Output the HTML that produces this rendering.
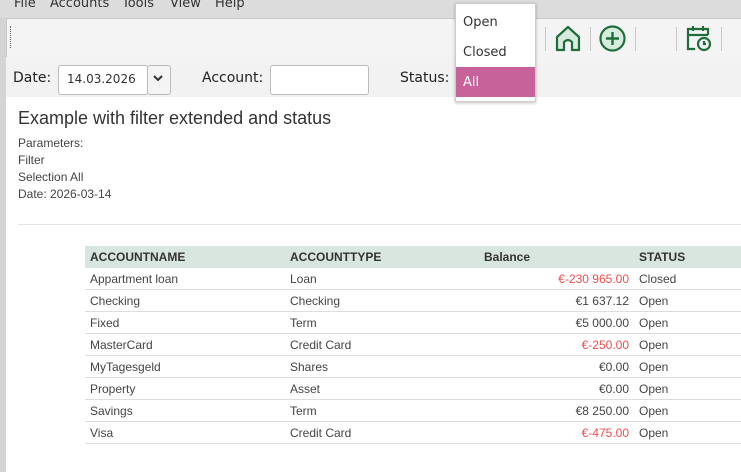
<!DOCTYPE html>
<html><head><style>
body{margin:0;width:741px;height:472px;overflow:hidden;background:#fff;font-family:"DejaVu Sans","Liberation Sans",sans-serif;position:relative}
.abs{position:absolute}
.menu{left:0;top:0;width:741px;height:18px;background:#dcdcdc;font-size:13px;color:#333}
.menu span{position:absolute;top:-4px}
.tb{left:6px;top:18px;width:735px;height:38px;background:#f4f4f4;border-top:1px solid #c8c8c8;border-bottom:1px solid #c8c8c8;border-left:1px solid #c8c8c8}
.fr{left:6px;top:57px;width:735px;height:40px;background:#f2f2f2}
.lbar{left:0;top:18px;width:6px;height:454px;background:#d4d4d4}
.lab{font-size:14px;color:#222}
.inp{background:#fff;border:1px solid #bbb;border-radius:3px}
.sep{width:1px;height:24px;background:#c9c9c9;top:27px}
.rep{font-family:"Liberation Sans",sans-serif;color:#444}
table{border-collapse:collapse;table-layout:fixed;font-family:"Liberation Sans",sans-serif;font-size:12px;color:#444}
td,th{height:21px;padding:0 5px;border-bottom:1px solid #ddd;text-align:left;white-space:nowrap;overflow:hidden}
th{background:#d9e6df;height:22px;border:none;font-weight:bold;color:#333}
.r{text-align:right}.neg{color:#f04e4e}
.pop{left:455px;top:3px;width:79px;height:97px;background:#fff;border:1px solid #ccc;box-shadow:0 1px 3px rgba(0,0,0,.25);font-size:13px;color:#333}
.pop div{position:absolute;left:7px}
</style></head><body>
<div class="abs menu"><span style="left:14px">File</span><span style="left:50px">Accounts</span><span style="left:122px">Tools</span><span style="left:170px">View</span><span style="left:215px">Help</span></div>
<div class="abs lbar"></div>
<div class="abs tb"></div>
<div class="abs" style="left:10px;top:26px;width:1px;height:22px;border-left:1px dotted #666"></div>
<div class="abs sep" style="left:545px"></div><div class="abs sep" style="left:590px"></div><div class="abs sep" style="left:635px"></div><div class="abs sep" style="left:676px"></div><div class="abs sep" style="left:721px"></div>
<svg class="abs" style="left:555px;top:25px" width="26" height="27" viewBox="0 0 26 27"><path d="M2 12 L13 2 L24 12 V25 H17 V17 Q13 13 9 17 V25 H2 Z" fill="#d8ebdf" stroke="#1f6e3a" stroke-width="2.2" stroke-linejoin="round"/></svg>
<svg class="abs" style="left:599px;top:25px" width="27" height="27" viewBox="0 0 27 27"><circle cx="13.5" cy="13.5" r="12" fill="#d8ebdf" stroke="#1f6e3a" stroke-width="2.2"/><path d="M13.5 7v13M7 13.5h13" stroke="#1f6e3a" stroke-width="2.4"/></svg>
<svg class="abs" style="left:685px;top:24px" width="28" height="28" viewBox="0 0 28 28" fill="none" stroke="#1f6e3a" stroke-width="2.2"><path d="M10 25H3V5H23V11M3 11H23M8 2V7M18 2V7"/><circle cx="19" cy="20" r="6"/><path d="M19 17v3h2"/></svg>
<div class="abs fr"></div>
<div class="abs lab" style="left:13px;top:70px">Date:</div>
<div class="abs inp" style="left:58px;top:65px;width:88px;height:28px"></div>
<div class="abs" style="left:67px;top:72px;font-size:12px;color:#333">14.03.2026</div>
<div class="abs inp" style="left:147px;top:65px;width:22px;height:28px;background:#f4f4f4"></div>
<svg class="abs" style="left:152px;top:74px" width="12" height="8"><path d="M2 2l4 4 4-4" stroke="#333" stroke-width="2" fill="none"/></svg>
<div class="abs lab" style="left:202px;top:70px">Account:</div>
<div class="abs inp" style="left:270px;top:65px;width:97px;height:28px"></div>
<div class="abs lab" style="left:400px;top:70px">Status:</div>
<div class="abs pop"><div style="top:11px">Open</div><div style="top:41px">Closed</div><div style="left:0;top:63px;width:79px;height:30px;background:#c7629a"></div><div style="top:71px;color:#fff">All</div></div>
<div class="abs rep" style="left:18px;top:108px;font-size:18px;color:#333">Example with filter extended and status</div>
<div class="abs rep" style="left:18px;top:135px;font-size:12px;line-height:17px">Parameters:<br>Filter<br>Selection All<br>Date: 2026-03-14</div>
<div class="abs" style="left:18px;top:224px;width:723px;height:1px;background:#e6e6e6"></div>
<table class="abs" style="left:85px;top:246px;width:660px">
<colgroup><col style="width:200px"><col style="width:194px"><col style="width:155px"><col></colgroup>
<tr><th>ACCOUNTNAME</th><th>ACCOUNTTYPE</th><th>Balance</th><th>STATUS</th></tr>
<tr><td>Appartment loan</td><td>Loan</td><td class="r neg">€-230 965.00</td><td>Closed</td></tr>
<tr><td>Checking</td><td>Checking</td><td class="r">€1 637.12</td><td>Open</td></tr>
<tr><td>Fixed</td><td>Term</td><td class="r">€5 000.00</td><td>Open</td></tr>
<tr><td>MasterCard</td><td>Credit Card</td><td class="r neg">€-250.00</td><td>Open</td></tr>
<tr><td>MyTagesgeld</td><td>Shares</td><td class="r">€0.00</td><td>Open</td></tr>
<tr><td>Property</td><td>Asset</td><td class="r">€0.00</td><td>Open</td></tr>
<tr><td>Savings</td><td>Term</td><td class="r">€8 250.00</td><td>Open</td></tr>
<tr><td>Visa</td><td>Credit Card</td><td class="r neg">€-475.00</td><td>Open</td></tr>
</table>
</body></html>
